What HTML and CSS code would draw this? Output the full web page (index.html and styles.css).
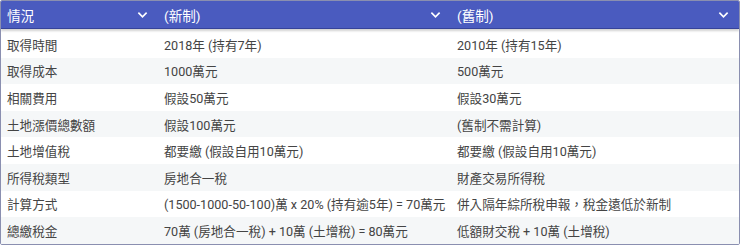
FILE: index.html
```html
<!DOCTYPE html>
<html lang="zh-Hant">
<head>
<meta charset="utf-8">
<link rel="stylesheet" href="styles.css">
</head>
<body>
<div class="table">
  <div class="head">
    <div class="hcell"><span>情況</span><svg class="chev" viewBox="0 0 12 8"><path d="M1.5 1.5 L6 6 L10.5 1.5" /></svg></div>
    <div class="hcell"><span>(新制)</span><svg class="chev" viewBox="0 0 12 8"><path d="M1.5 1.5 L6 6 L10.5 1.5" /></svg></div>
    <div class="hcell"><span>(舊制)</span><svg class="chev" viewBox="0 0 12 8"><path d="M1.5 1.5 L6 6 L10.5 1.5" /></svg></div>
  </div>
  <div class="body">
    <div class="row"><div class="cell">取得時間</div><div class="cell">2018年 (持有7年)</div><div class="cell">2010年 (持有15年)</div></div>
    <div class="row"><div class="cell">取得成本</div><div class="cell">1000萬元</div><div class="cell">500萬元</div></div>
    <div class="row"><div class="cell">相關費用</div><div class="cell">假設50萬元</div><div class="cell">假設30萬元</div></div>
    <div class="row"><div class="cell">土地漲價總數額</div><div class="cell">假設100萬元</div><div class="cell">(舊制不需計算)</div></div>
    <div class="row"><div class="cell">土地增值稅</div><div class="cell">都要繳 (假設自用10萬元)</div><div class="cell">都要繳 (假設自用10萬元)</div></div>
    <div class="row"><div class="cell">所得稅類型</div><div class="cell">房地合一稅</div><div class="cell">財產交易所得稅</div></div>
    <div class="row"><div class="cell">計算方式</div><div class="cell">(1500-1000-50-100)萬 x 20% (持有逾5年) = 70萬元</div><div class="cell">併入隔年綜所稅申報，稅金遠低於新制</div></div>
    <div class="row"><div class="cell">總繳稅金</div><div class="cell">70萬 (房地合一稅) + 10萬 (土增稅) = 80萬元</div><div class="cell">低額財交稅 + 10萬 (土增稅)</div></div>
  </div>
</div>
</body>
</html>
```

FILE: styles.css
```css
* { box-sizing: border-box; }
html, body { margin: 0; padding: 0; background: #ffffff; }
body {
  width: 740px;
  height: 248px;
  font-family: Roboto, "Noto Sans CJK TC", sans-serif;
  font-size: 12.6px;
  color: #444444;
}
.table {
  width: 740px;
  border: 1px solid #8a8fb0;
  border-radius: 2px;
  overflow: hidden;
}
.head {
  display: grid;
  grid-template-columns: 157px 293px 1fr;
  background: #4a5bbf;
  height: 28px;
  border-bottom: 1px solid #36439a;
  box-shadow: 0 2px 2px rgba(0,0,0,0.18);
  position: relative;
  z-index: 1;
}
.hcell {
  display: flex;
  align-items: center;
  justify-content: space-between;
  padding: 0 10px 0 6px;
  color: #ffffff;
  font-size: 13.6px;
}
.chev { width: 11px; height: 8px; fill: none; stroke: #ffffff; stroke-width: 1.8; }
.body { padding-top: 2px; }
.row {
  display: grid;
  grid-template-columns: 157px 293px 1fr;
  height: 26.6px;
  align-items: center;
}
.row:nth-child(even) { background: #f5f7f8; }
.cell { padding-left: 6px; white-space: nowrap; }
```
